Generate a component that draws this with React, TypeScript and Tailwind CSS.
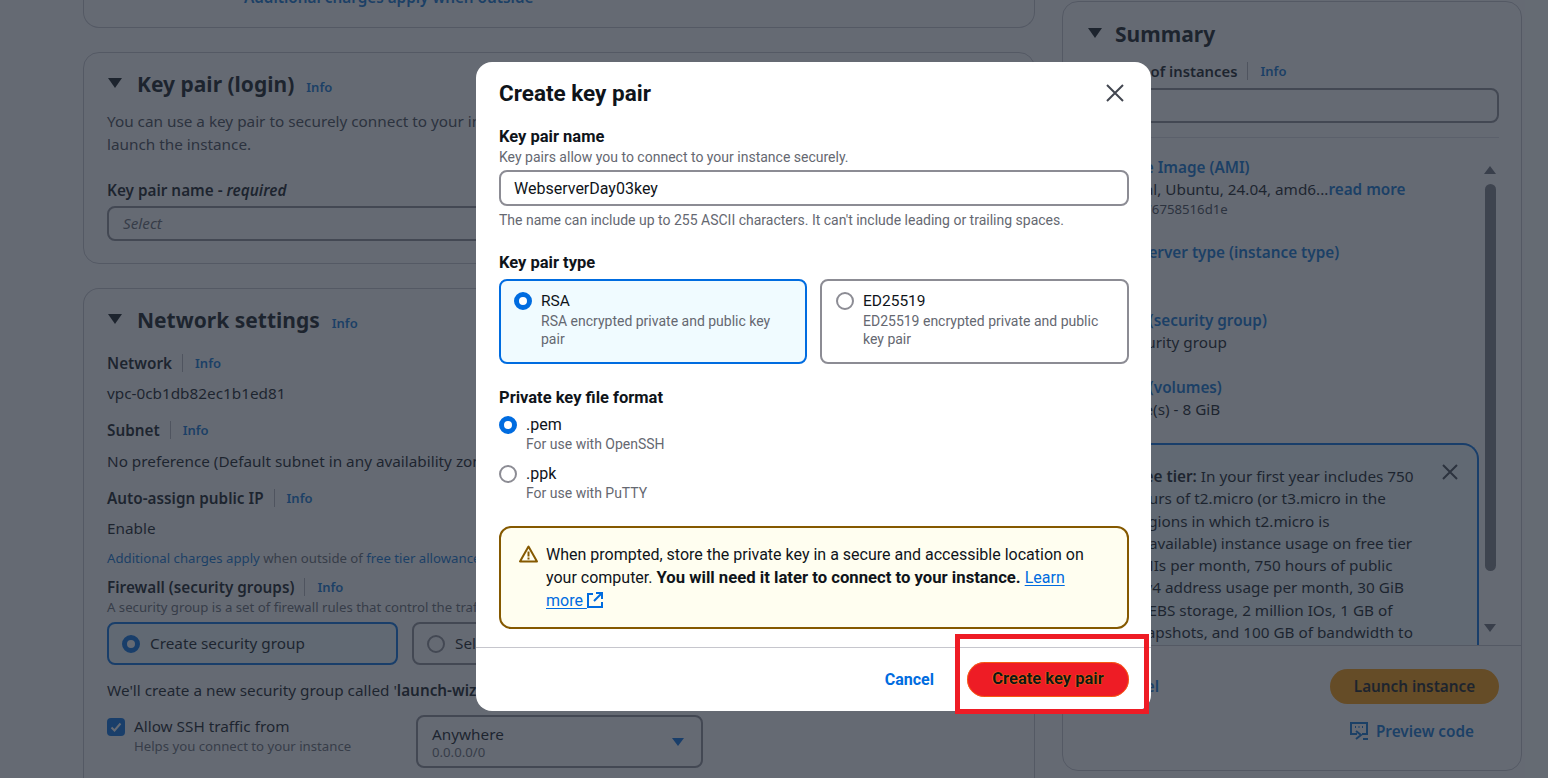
import { ReactNode } from "react"

const Caret = () => (
  <svg width="16" height="12" viewBox="0 0 16 12" className="shrink-0">
    <path d="M1 1h14L8 11z" fill="#0f141a" />
  </svg>
)

const Info = ({ className = "" }: { className?: string }) => (
  <span className={`text-[13px] font-semibold text-[#0972d3] ${className}`}>Info</span>
)

const Label = ({ children }: { children: ReactNode }) => (
  <div className="flex items-center h-[18px] text-[15.300px] leading-[18px] font-semibold text-[#0f141a] whitespace-nowrap">
    <span>{children}</span>
    <span className="ml-[10px] mr-[12px] w-px h-[18px] bg-[#b4b4bb]" />
    <Info />
  </div>
)

const SectionTitle = ({ title }: { title: string }) => (
  <div className="flex items-center h-[30px]">
    <Caret />
    <h2 className="ml-[14px] mt-[2px] text-[21px] leading-[30px] font-bold text-[#0f141a] whitespace-nowrap">{title}</h2>
    <Info className="ml-[12px] mt-[9px]" />
  </div>
)

const Radio = ({ on }: { on?: boolean }) =>
  on ? (
    <span className="block w-[18px] h-[18px] rounded-full bg-white border-[5px] border-[#006ce0] shrink-0" />
  ) : (
    <span className="block w-[18px] h-[18px] rounded-full bg-white border-2 border-[#8c8c94] shrink-0" />
  )

function KeyPairCard() {
  return (
    <section className="mt-6 h-[212px] rounded-2xl border border-[#c6c6cd] pl-[23px] pr-6 pt-[15px]">
      <SectionTitle title="Key pair (login)" />
      <p className="mt-[12px] w-[905px] text-[15.300px] leading-[23px] text-[#424650]">
        You can use a key pair to securely connect to your instance. Ensure that you have access to the selected key pair before you launch the instance.
      </p>
      <div className="mt-[25px] text-[15.300px] leading-[18px] font-semibold text-[#0f141a]">
        Key pair name - <em className="font-semibold">required</em>
      </div>
      <div className="mt-[7px] h-[35px] rounded-lg border-2 border-[#8c8c94] pl-[14px] flex items-center text-[15.300px] italic text-[#656871]">
        Select
      </div>
    </section>
  )
}

function NetworkCard() {
  return (
    <section className="mt-6 flex-1 rounded-t-2xl border border-b-0 border-[#c6c6cd] pl-[23px] pr-6 pt-[15px] text-[15.300px] text-[#0f141a]">
      <SectionTitle title="Network settings" />
      <div className="mt-[20px]"><Label>Network</Label></div>
      <div className="mt-[10px] leading-[22px]">vpc-0cb1db82ec1b1ed81</div>
      <div className="mt-[17px]"><Label>Subnet</Label></div>
      <div className="mt-[11px] leading-[22px] whitespace-nowrap">No preference (Default subnet in any availability zone)</div>
      <div className="mt-[17px]"><Label>Auto-assign public IP</Label></div>
      <div className="mt-[10px] leading-[22px]">Enable</div>
      <div className="mt-[11px] text-[13.200px] leading-[16px] text-[#656871] whitespace-nowrap">
        <span className="text-[#0972d3]">Additional charges apply</span> when outside of <span className="text-[#0972d3]">free tier allowance</span>
      </div>
      <div className="mt-[12px]"><Label>Firewall (security groups)</Label></div>
      <div className="text-[13.200px] leading-[16px] text-[#656871] mt-[3px] whitespace-nowrap">
        A security group is a set of firewall rules that control the traffic for your instance.
      </div>
      <div className="mt-[7px] flex gap-[14px]">
        <div className="w-[291px] h-[43px] rounded-lg border-2 border-[#006ce0] bg-[#f0fbff] flex items-center pl-[13px] gap-[10px]">
          <Radio on />
          <span>Create security group</span>
        </div>
        <div className="w-[291px] h-[43px] rounded-lg border-2 border-[#8c8c94] flex items-center pl-[13px] gap-[10px]">
          <Radio />
          <span className="whitespace-nowrap">Select existing security group</span>
        </div>
      </div>
      <div className="mt-[14px] leading-[22px] whitespace-nowrap">
        We'll create a new security group called '<b className="font-semibold">launch-wizard-1</b>' with the following rules:
      </div>
      <div className="mt-[14px] flex">
        <div className="w-[309px] flex pt-[1px]">
          <span className="mt-[2px] w-[18px] h-[18px] rounded-[4px] bg-[#006ce0] flex items-center justify-center shrink-0">
            <svg width="12" height="12" viewBox="0 0 12 12" fill="none">
              <path d="M1.5 6.5 4.5 9.5 10.5 2.5" stroke="#fff" strokeWidth="2" />
            </svg>
          </span>
          <div className="ml-[9px]">
            <div className="leading-[20px]">Allow SSH traffic from</div>
            <div className="text-[13.200px] leading-[16px] text-[#656871] mt-[2px] whitespace-nowrap">Helps you connect to your instance</div>
          </div>
        </div>
        <div className="w-[287px] h-[53px] rounded-lg border-2 border-[#8c8c94] flex items-center justify-between pl-[14px] pr-[16px]">
          <div>
            <div className="leading-[20px]">Anywhere</div>
            <div className="text-[13.200px] leading-[16px] text-[#656871]">0.0.0.0/0</div>
          </div>
          <svg width="14" height="10" viewBox="0 0 14 10"><path d="M1 1h12L7 9z" fill="#006ce0" /></svg>
        </div>
      </div>
    </section>
  )
}

function SummaryCard() {
  return (
    <aside className="w-[460px] h-[770px] mt-px rounded-2xl border border-[#c6c6cd] flex flex-col text-[15.300px] text-[#0f141a]">
      <div className="pl-6 pr-[22px] pt-[16px]">
        <div className="flex items-center h-[30px]">
          <Caret />
          <h2 className="ml-[12px] mt-[2px] text-[21px] leading-[30px] font-bold">Summary</h2>
        </div>
        <div className="mt-[14px]"><Label><span className="text-[14.800px]">Number of instances</span></Label></div>
        <div className="mt-[8px] h-[35px] rounded-lg border-2 border-[#8c8c94] pl-[14px] flex items-center">1</div>
        <div className="mt-[14px] h-px bg-[#dedee3]" />
      </div>
      <div className="flex-1 min-h-0 overflow-hidden relative px-6 pt-[19px]">
        <div className="w-[392px]">
          <div className="leading-[20px] font-semibold text-[#0972d3]">Software Image (AMI)</div>
          <div className="mt-[1px] leading-[22px] whitespace-nowrap">
            Canonical, Ubuntu, 24.04, amd6...<span className="font-semibold text-[#0972d3]">read more</span>
          </div>
          <div className="text-[13.200px] leading-[18px] text-[#424650]">ami-0e8a76758516d1e</div>
          <div className="mt-[24px] leading-[20px] font-semibold text-[#0972d3]">Virtual server type (instance type)</div>
          <div className="mt-[2px] leading-[22px]">t2.micro</div>
          <div className="mt-[24px] leading-[20px] font-semibold text-[#0972d3]">Firewall (security group)</div>
          <div className="mt-px leading-[22px]">New security group</div>
          <div className="mt-[24px] leading-[20px] font-semibold text-[#0972d3]">Storage (volumes)</div>
          <div className="mt-px leading-[22px]">1 volume(s) - 8 GiB</div>
          <div className="mt-[23px] relative w-[392px] rounded-t-2xl border-2 border-b-0 border-[#006ce0] bg-[#f0fbff] pl-[41px] pt-[20px] pb-2 leading-[22.300px] whitespace-nowrap">
            <svg width="16" height="16" viewBox="0 0 16 16" className="absolute right-[19px] top-[19px]" fill="none">
              <path d="M1 1l14 14M15 1 1 15" stroke="#424650" strokeWidth="2" />
            </svg>
            <b className="font-semibold">Free tier:</b> In your first year includes 750<br />
            hours of t2.micro (or t3.micro in the<br />
            Regions in which t2.micro is<br />
            unavailable) instance usage on free tier<br />
            AMIs per month, 750 hours of public<br />
            IPv4 address usage per month, 30 GiB<br />
            of EBS storage, 2 million IOs, 1 GB of<br />
            snapshots, and 100 GB of bandwidth to<br />
            the internet.
          </div>
        </div>
        <div className="absolute right-[25px] top-[28px] bottom-[13px] w-[12px] flex flex-col items-center">
          <svg width="12" height="8" viewBox="0 0 12 8"><path d="M6 0l6 8H0z" fill="#6b6f78" /></svg>
          <div className="mt-[10px] w-[11px] h-[387px] rounded-full bg-[#7d7f87]" />
          <svg width="12" height="8" viewBox="0 0 12 8" className="mt-auto"><path d="M6 8 0 0h12z" fill="#6b6f78" /></svg>
        </div>
      </div>
      <div className="h-[125px] border-t border-[#c6c6cd] pl-6 pr-[22px] pt-[23px]">
        <div className="flex items-center justify-end">
          <span className="mr-[171px] font-semibold text-[#0972d3]">Cancel</span>
          <span className="w-[169px] h-[35px] rounded-full bg-[#ff9900] flex items-center justify-center font-semibold">Launch instance</span>
        </div>
        <div className="mt-[16px] pr-[25px] flex items-center justify-end gap-[8px] font-semibold text-[#0972d3]">
          <svg width="18" height="18" viewBox="0 0 18 18" fill="none" stroke="#0972d3" strokeWidth="2">
            <path d="M7 12H1V1h16v11h-5" />
            <path d="M6 9l5 4-5 4" />
            <path d="M13 17h5M5 5h1M8.500 5h1M12 5h1" />
          </svg>
          Preview code
        </div>
      </div>
    </aside>
  )
}

function KeyPairModal() {
  return (
    <div className="absolute left-[476px] top-[62px] w-[675px] h-[649px] rounded-[16px] bg-white font-['Roboto',sans-serif] text-[#0f141a] flex flex-col">
      <div className="flex-1 pl-[23px] pr-[22px] pt-[15px]">
        <div className="flex items-center justify-between h-[32px]">
          <h1 className="text-[22.500px] leading-[32px] font-bold">Create key pair</h1>
          <svg width="20" height="20" viewBox="0 0 20 20" fill="none" className="mr-[4px]">
            <path d="M2 2l16 16M18 2 2 18" stroke="#424650" strokeWidth="2" />
          </svg>
        </div>
        <div className="mt-[19px] text-[16.500px] leading-[18px] font-bold">Key pair name</div>
        <div className="mt-[3px] text-sm leading-[16px] text-[#656871]">Key pairs allow you to connect to your instance securely.</div>
        <div className="mt-[5px] h-[36px] rounded-lg border-2 border-[#8c8c94] pl-[13px] pt-[2px] flex items-center text-base">WebserverDay03key</div>
        <div className="mt-[6px] text-sm leading-[16px] text-[#656871]">The name can include up to 255 ASCII characters. It can't include leading or trailing spaces.</div>
        <div className="mt-[26px] text-[16.500px] leading-[18px] font-bold">Key pair type</div>
        <div className="mt-[7px] flex gap-[13px]">
          <div className="w-[308px] h-[85px] rounded-lg border-2 border-[#006ce0] bg-[#f0fbff] pl-[13px] pt-[10px] flex gap-[9px]">
            <span className="mt-[1px]"><Radio on /></span>
            <div>
              <div className="mt-px text-[15.500px] leading-[18px]">RSA</div>
              <div className="mt-[2px] text-sm leading-[18px] text-[#656871] w-[245px]">RSA encrypted private and public key pair</div>
            </div>
          </div>
          <div className="w-[309px] h-[85px] rounded-lg border-2 border-[#8c8c94] pl-[14px] pt-[10px] flex gap-[9px]">
            <span className="mt-[1px]"><Radio /></span>
            <div>
              <div className="mt-px text-[15.500px] leading-[18px]">ED25519</div>
              <div className="mt-[2px] text-sm leading-[18px] text-[#656871] w-[245px]">ED25519 encrypted private and public key pair</div>
            </div>
          </div>
        </div>
        <div className="mt-[25px] text-[16.500px] leading-[18px] font-bold">Private key file format</div>
        <div className="mt-[8px] flex gap-[9px]">
          <span className="mt-[1px]"><Radio on /></span>
          <div>
            <div className="text-base leading-[20px]">.pem</div>
            <div className="text-sm leading-[18px] text-[#656871]">For use with OpenSSH</div>
          </div>
        </div>
        <div className="mt-[11px] flex gap-[9px]">
          <span className="mt-[1px]"><Radio /></span>
          <div>
            <div className="text-base leading-[20px]">.ppk</div>
            <div className="text-sm leading-[18px] text-[#656871]">For use with PuTTY</div>
          </div>
        </div>
        <div className="mt-[24px] h-[103px] rounded-xl border-2 border-[#855900] bg-[#fffef0] pl-[18px] pr-[30px] pt-[15px] flex gap-[8px]">
          <svg width="19" height="18" viewBox="0 0 19 18" fill="none" className="mt-[2px] shrink-0">
            <path d="M9.500 1.500 1 16.500h17z" stroke="#855900" strokeWidth="2" strokeLinejoin="round" />
            <path d="M9.500 6.500v5M9.500 12.600v1.800" stroke="#855900" strokeWidth="2" />
          </svg>
          <p className="text-base leading-[23px]">
            When prompted, store the private key in a secure and accessible location on your computer.{" "}
            <b className="font-bold text-[16.700px]">You will need it later to connect to your instance.</b>{" "}
            <span className="text-[#006ce0] underline underline-offset-2">Learn</span>{" "}
            <span className="whitespace-nowrap">
              <span className="text-[#006ce0] underline underline-offset-2">more&nbsp;</span>
              <svg width="16" height="16" viewBox="0 0 16 16" fill="none" stroke="#006ce0" strokeWidth="2" className="inline-block align-[-2px]">
                <path d="M6 2H1v13h14v-5M9 1h6v6M15 1 7 9" />
              </svg>
            </span>
          </p>
        </div>
      </div>
      <div className="h-[64px] border-t border-[#c6c6cd] pr-[22px] pt-[14px] flex justify-end gap-[33px]">
        <span className="h-[35px] leading-[35px] text-base font-bold text-[#006ce0]">Cancel</span>
        <span className="w-[162px] h-[35px] rounded-full bg-[#ee1c25] outline outline-1 outline-[#ff9900]/50 -outline-offset-1 flex items-center justify-center text-[16.500px] font-bold text-[#0f141a] [text-shadow:0_0_1px_#ff9900,0_0_1px_#ff9900]">
          Create key pair
        </span>
      </div>
    </div>
  )
}

export default function App() {
  return (
    <div className="relative w-[1548px] h-[778px] overflow-hidden bg-white font-['Noto_Sans',sans-serif]">
      <div className="flex gap-[27px] pl-[83px]">
        <div className="w-[952px] h-[778px] flex flex-col">
          <section className="h-[28px] rounded-b-2xl border border-t-0 border-[#c6c6cd] pl-[160px] overflow-hidden">
            <div className="-mt-[14px] text-[15.300px] font-semibold text-[#0972d3]">Additional charges apply when outside</div>
          </section>
          <KeyPairCard />
          <NetworkCard />
        </div>
        <SummaryCard />
      </div>
      {/* dim layer, same colour as the console's modal backdrop */}
      <div className="absolute inset-0 bg-[#232b37]/70" />
      <KeyPairModal />
      {/* annotation drawn on the screenshot */}
      <div className="absolute left-[955px] top-[634px] w-[194px] h-[80px] border-[5px] border-[#ee1c25]" />
    </div>
  )
}
